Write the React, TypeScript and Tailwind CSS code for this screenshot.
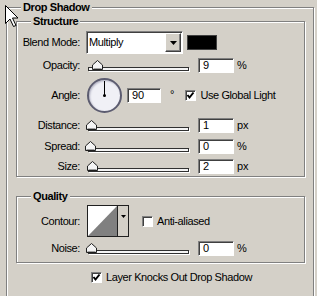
import React from "react";

const font = { fontFamily: '"Liberation Sans", Arial, sans-serif' };

function Input({ value }: { value: string }) {
  return (
    <div className="w-[36px] h-[15px] bg-white border-t border-l border-[#808080] border-b border-r border-b-white border-r-white shadow-[inset_1px_1px_0_#404040] flex items-center pl-[4px] text-[11px] leading-none">
      {value}
    </div>
  );
}

function Slider({ pos }: { pos: number }) {
  return (
    <div className="relative w-[101px] h-[12px]">
      <div className="absolute left-0 right-0 bottom-[1px] h-[4px] border border-[#303030] bg-[#f4f4f4] shadow-[1px_1px_0_#fff]" />
      <svg className="absolute top-0" style={{ left: pos }} width="11" height="10" viewBox="0 0 11 10">
        <polygon points="0.5,9.5 0.5,5 5.5,0.5 10.5,5 10.5,9.5" fill="#f4f4f4" stroke="#202020" strokeWidth="1" />
        <line x1="1.5" y1="8.5" x2="9.5" y2="8.5" stroke="#a0a0a0" />
      </svg>
    </div>
  );
}

function Check({ checked }: { checked?: boolean }) {
  return (
    <div className="w-[11px] h-[11px] bg-white border-t border-l border-[#808080] border-b border-r border-b-white border-r-white shadow-[inset_1px_1px_0_#404040] flex items-center justify-center">
      {checked && (
        <svg width="9" height="9" viewBox="0 0 9 9">
          <path d="M1.5 4 L3.5 6.5 L7.5 1.5" fill="none" stroke="#000" strokeWidth="2" />
        </svg>
      )}
    </div>
  );
}

function Label({ children }: { children: React.ReactNode }) {
  return <div className="w-[63px] text-right text-[11px] leading-none tracking-[-0.4px] shrink-0">{children}</div>;
}

function Group({ title, className, children }: { title: string; className?: string; children?: React.ReactNode }) {
  return (
    <div className={"relative border border-[#808080] shadow-[inset_1px_1px_0_#fff,1px_1px_0_#fff] " + (className || "")}>
      <div className="absolute left-[14px] top-[-7px] px-[2px] bg-[#d4d0c8] text-[11px] leading-[13px] font-bold tracking-[-0.4px]">
        {title}
      </div>
      {children}
    </div>
  );
}

export default function App() {
  return (
    <div className="relative w-[317px] h-[296px] bg-[#d4d0c8] overflow-hidden text-black" style={font}>
      <div className="pl-[6px] pt-[7px]">
        <Group title="Drop Shadow" className="w-[308px] h-[300px] pl-[9px] pt-[13px]">
          <Group title="Structure" className="w-[289px] h-[156px] pt-[9px]">
            {/* Blend mode */}
            <div className="flex items-center h-[23px]">
              <Label>Blend Mode:</Label>
              <div className="ml-[6px] w-[97px] h-[23px] bg-white border-t border-l border-[#808080] border-b border-r border-b-white border-r-white shadow-[inset_1px_1px_0_#404040] flex items-center justify-between pl-[2px] pr-[1px]">
                <span className="text-[11px] leading-none tracking-[-0.4px]">Multiply</span>
                <div className="w-[16px] h-[19px] bg-[#d4d0c8] border border-t-white border-l-white border-b-[#404040] border-r-[#404040] shadow-[inset_-1px_-1px_0_#808080] flex items-center justify-center">
                  <svg width="7" height="4" viewBox="0 0 7 4"><polygon points="0,0 7,0 3.5,4" fill="#000" /></svg>
                </div>
              </div>
              <div className="ml-[4px] w-[30px] h-[15px] bg-black border border-[#404040]" />
            </div>
            {/* Opacity */}
            <div className="flex items-center h-[15px] mt-[4px]">
              <Label>Opacity:</Label>
              <div className="ml-[8px]"><Slider pos={4} /></div>
              <div className="ml-[9px]"><Input value="9" /></div>
              <span className="ml-[3px] text-[11px] leading-none">%</span>
            </div>
            {/* Angle */}
            <div className="flex items-center h-[35px] mt-[5px]">
              <Label>Angle:</Label>
              <div className="ml-[7px] w-[35px] h-[35px] rounded-full border-2 border-[#5c5c70] bg-[#f0f0f6] relative shadow-[inset_1px_1px_2px_#b0b0c0]">
                <div className="absolute left-[15px] top-[1px] w-[1px] h-[15px] bg-black" />
                <div className="absolute left-[14px] top-[14px] w-[3px] h-[3px] bg-black rounded-full" />
              </div>
              <div className="ml-[5px]">
                <div className="w-[34px] h-[15px] bg-white border-t border-l border-[#808080] border-b border-r border-b-white border-r-white shadow-[inset_1px_1px_0_#404040] flex items-center pl-[4px] text-[11px] leading-none">90</div>
              </div>
              <span className="ml-[9px] self-start mt-[11px] text-[11px] leading-none">°</span>
              <div className="ml-[11px]"><Check checked /></div>
              <span className="ml-[4px] text-[11px] leading-none tracking-[-0.4px]">Use Global Light</span>
            </div>
            {/* Distance */}
            <div className="flex items-center h-[15px] mt-[5px]">
              <Label>Distance:</Label>
              <div className="ml-[8px]"><Slider pos={-2} /></div>
              <div className="ml-[9px]"><Input value="1" /></div>
              <span className="ml-[3px] text-[11px] leading-none">px</span>
            </div>
            {/* Spread */}
            <div className="flex items-center h-[15px] mt-[6px]">
              <Label>Spread:</Label>
              <div className="ml-[8px]"><Slider pos={-3} /></div>
              <div className="ml-[9px]"><Input value="0" /></div>
              <span className="ml-[3px] text-[11px] leading-none">%</span>
            </div>
            {/* Size */}
            <div className="flex items-center h-[15px] mt-[5px]">
              <Label>Size:</Label>
              <div className="ml-[8px]"><Slider pos={-1} /></div>
              <div className="ml-[9px]"><Input value="2" /></div>
              <span className="ml-[3px] text-[11px] leading-none">px</span>
            </div>
          </Group>
          <Group title="Quality" className="w-[289px] h-[67px] mt-[19px] pt-[8px]">
            <div className="flex items-center h-[32px]">
              <Label>Contour:</Label>
              <div className="ml-[7px] w-[42px] h-[32px] border border-[#202020] bg-[#d4d0c8] flex">
                <svg width="29" height="30" viewBox="0 0 29 30" className="block">
                  <rect x="0" y="0" width="29" height="30" fill="#ffffff" />
                  <polygon points="0,30 29,0 29,30" fill="#808080" />
                </svg>
                <div className="w-[1px] bg-[#202020]" />
                <div className="flex-1 flex justify-center pt-[9px]">
                  <svg width="5" height="3" viewBox="0 0 5 3"><polygon points="0,0 5,0 2.5,3" fill="#000" /></svg>
                </div>
              </div>
              <div className="ml-[13px]"><Check /></div>
              <span className="ml-[4px] text-[11px] leading-none tracking-[-0.4px]">Anti-aliased</span>
            </div>
            <div className="flex items-center h-[15px] mt-[4px]">
              <Label>Noise:</Label>
              <div className="ml-[8px]"><Slider pos={-2} /></div>
              <div className="ml-[9px]"><Input value="0" /></div>
              <span className="ml-[3px] text-[11px] leading-none">%</span>
            </div>
          </Group>
          <div className="flex items-center mt-[9px] ml-[75px] h-[11px]">
            <Check checked />
            <span className="ml-[4px] text-[11px] leading-none tracking-[-0.4px]">Layer Knocks Out Drop Shadow</span>
          </div>
        </Group>
      </div>
      <svg className="absolute left-[4px] top-[4px]" width="15" height="24" viewBox="0 0 15 24">
        <polygon points="1.5,1.5 1.5,19.5 6,15 9.5,22.5 12,21.5 8.5,14 14,14" fill="#fff" stroke="#000" strokeWidth="1" strokeLinejoin="miter" />
      </svg>
    </div>
  );
}
